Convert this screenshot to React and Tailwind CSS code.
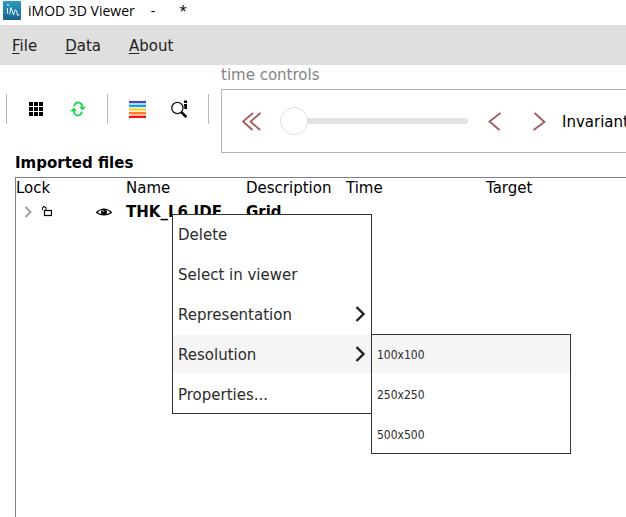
import React from "react";

function Separator() {
  return <div className="h-[30px] w-px shrink-0 bg-[#b9b9b9]" />;
}

function ToolButton({ label, children }) {
  return (
    <button type="button" aria-label={label} className="flex h-10 w-[42px] items-center justify-center">
      {children}
    </button>
  );
}

function AppIcon() {
  return (
    <svg width="18" height="19" viewBox="0 0 18 19" aria-hidden="true">
      <defs>
        <linearGradient id="tile" x1="0" y1="0" x2="0" y2="1">
          <stop offset="0" stopColor="#2a9cc0" />
          <stop offset="1" stopColor="#1a6391" />
        </linearGradient>
      </defs>
      <rect width="18" height="19" rx="1" fill="url(#tile)" />
      <path
        d="M4.500 7V12.500M6.500 13.500L8 6.500L10.500 14L12 9L13.500 9.500L14.500 14.500L16.500 13.500"
        fill="none"
        stroke="#e4f4fa"
        strokeWidth="1"
      />
      <circle cx="5" cy="4" r="0.9" fill="#d9f0f7" />
    </svg>
  );
}

function GridIcon() {
  const steps = [0, 5, 10];
  return (
    <svg width="14" height="14" viewBox="0 0 14 14" aria-hidden="true">
      {steps.map((y) => steps.map((x) => <rect key={`${x}-${y}`} x={x} y={y} width="4" height="4" fill="#000" />))}
    </svg>
  );
}

function RefreshIcon() {
  return (
    <svg width="16" height="16" viewBox="0 0 16 16" aria-hidden="true">
      <path d="M4 5.200Q5.200 1.600 8.200 1.400Q12 1.800 12.400 6.500" fill="none" stroke="#19d84a" strokeWidth="1.800" />
      <path d="M12 10.800Q10.800 14.400 7.800 14.600Q4 14.200 3.600 9.500" fill="none" stroke="#19d84a" strokeWidth="1.800" />
      <path d="M9 5.800H16L12.400 9.400Z" fill="#19d84a" />
      <path d="M0 10.200H7L3.600 6.600Z" fill="#19d84a" />
    </svg>
  );
}

function LegendIcon() {
  return (
    <svg width="17" height="18" viewBox="0 0 17 18" aria-hidden="true">
      <rect width="17" height="18" fill="#f4f0f4" />
      <rect y="1" width="17" height="2" fill="#3f48cc" />
      <rect y="3" width="17" height="2" fill="#b9d2f5" />
      <rect y="5" width="17" height="2" fill="#00a8f3" />
      <rect y="7" width="17" height="1" fill="#e3f0dc" />
      <rect y="8" width="17" height="1" fill="#ffdf6b" />
      <rect y="9" width="17" height="1" fill="#ffca18" />
      <rect y="10" width="17" height="1" fill="#ffe08a" />
      <rect y="12" width="17" height="2" fill="#ff7f27" />
      <rect y="14" width="17" height="2" fill="#ffb9a0" />
      <rect y="16" width="17" height="2" fill="#f5121a" />
    </svg>
  );
}

function IdentifyIcon() {
  return (
    <svg width="17" height="18" viewBox="0 0 17 18" aria-hidden="true">
      <circle cx="6.4" cy="8" r="5.6" fill="none" stroke="#111" strokeWidth="1.3" />
      <path d="M10.4 12.2L15.4 17.2" stroke="#000" strokeWidth="2.6" />
      <rect x="13" y="0.5" width="3" height="2.5" fill="#000" />
      <path d="M13 4H16V9H13.4Z" fill="#000" />
    </svg>
  );
}

function Chevron({ d, width, height, color, stroke }) {
  return (
    <svg width={width} height={height} viewBox={`0 0 ${width} ${height}`} aria-hidden="true" className="shrink-0">
      <path d={d} fill="none" stroke={color} strokeWidth={stroke} />
    </svg>
  );
}

function LockIcon() {
  return (
    <svg width="10" height="12" viewBox="0 0 10 12" aria-hidden="true">
      <path d="M0.500 4V1.500H1.500V0.500H3V1.500H4V4" fill="none" stroke="#000" />
      <rect x="2.500" y="4.500" width="7" height="5" fill="none" stroke="#000" strokeWidth="1.200" />
    </svg>
  );
}

function EyeIcon() {
  return (
    <svg width="16" height="9" viewBox="0 0 16 9" aria-hidden="true">
      <path d="M0.5 4.5Q4 1 8 1Q12 1 15.5 4.5Q12 7 8 7Q4 7 0.5 4.5Z" fill="#fff" stroke="#000" strokeWidth="1.1" />
      <circle cx="8" cy="4" r="3" fill="#000" />
      <circle cx="7" cy="3" r="0.8" fill="#fff" />
    </svg>
  );
}

function MenuBar() {
  return (
    <nav className="flex h-10 items-center gap-7 bg-[#dfdfdf] px-3 pt-0.5 text-[#222]">
      {["File", "Data", "About"].map((name) => (
        <button type="button" key={name}>
          <span className="underline underline-offset-2">{name[0]}</span>
          {name.slice(1)}
        </button>
      ))}
    </nav>
  );
}

function TimeControls() {
  return (
    <section className="ml-3 min-w-0 flex-1">
      <h2 className="h-6 text-[#838383]">time controls</h2>
      <div className="flex h-16 items-center overflow-hidden border border-r-0 border-[#b4b4b4] pl-5">
        <button type="button" aria-label="First time step" className="w-[38px] shrink-0">
          <Chevron d="M11 1L1 9.500L10.500 18M18.500 1L8.500 9.500L18 18" width={20} height={19} color="#a25a58" stroke={1.8} />
        </button>
        <input
          type="range"
          aria-label="Time step"
          min="0"
          max="100"
          defaultValue="0"
          className="h-7 w-[188px] shrink-0 appearance-none bg-transparent [&::-webkit-slider-runnable-track]:h-[6px] [&::-webkit-slider-runnable-track]:rounded-full [&::-webkit-slider-runnable-track]:bg-[#e3e3e3] [&::-webkit-slider-thumb]:-mt-[11px] [&::-webkit-slider-thumb]:size-7 [&::-webkit-slider-thumb]:appearance-none [&::-webkit-slider-thumb]:rounded-full [&::-webkit-slider-thumb]:border [&::-webkit-slider-thumb]:border-[#e0e0e0] [&::-webkit-slider-thumb]:bg-white"
        />
        <div className="flex shrink-0 gap-8 pr-4 pl-5">
          <button type="button" aria-label="Previous time step">
            <Chevron d="M12.500 1L1.500 9.500L11.500 18" width={13} height={19} color="#a25a58" stroke={1.8} />
          </button>
          <button type="button" aria-label="Next time step">
            <Chevron d="M1.500 1L11.500 10L0.500 18" width={13} height={19} color="#a25a58" stroke={1.8} />
          </button>
        </div>
        <span className="pt-0.5 whitespace-nowrap">Invariant</span>
      </div>
    </section>
  );
}

function ImportedFiles() {
  return (
    <section className="flex flex-1 flex-col pl-[15px]">
      <h2 className="h-6 font-bold">Imported files</h2>
      <div className="flex-1 overflow-hidden border-t border-l border-[#7f7f89]">
        <table className="w-full table-fixed text-left whitespace-nowrap">
          <colgroup>
            <col className="w-[110px]" />
            <col className="w-[120px]" />
            <col className="w-[100px]" />
            <col className="w-[140px]" />
            <col />
          </colgroup>
          <thead>
            <tr className="h-5">
              {["Lock", "Name", "Description", "Time", "Target"].map((name) => (
                <th key={name} scope="col" className="p-0 font-normal">
                  {name}
                </th>
              ))}
            </tr>
          </thead>
          <tbody>
            <tr className="h-7 font-bold">
              <td className="p-0">
                <div className="flex items-center pl-2">
                  <button type="button" aria-label="Expand" className="w-[18px]">
                    <Chevron d="M1.500 1L6.500 6L1.500 11" width={9} height={12} color="#a0a0a0" stroke={2} />
                  </button>
                  <button type="button" aria-label="Lock" className="w-[54px]">
                    <LockIcon />
                  </button>
                  <button type="button" aria-label="Visible">
                    <EyeIcon />
                  </button>
                </div>
              </td>
              <td className="p-0">THK_L6.IDF</td>
              <td className="p-0">Grid</td>
              <td />
              <td />
            </tr>
          </tbody>
        </table>
      </div>
    </section>
  );
}

function MenuItem({ label, arrow, active, small, children }) {
  return (
    <li className="relative">
      <button
        type="button"
        className={`flex h-[38px] w-full items-center justify-between px-[5px] ${active ? "bg-[#f5f5f5]" : "bg-white"} ${
          small ? "font-['DejaVu_Sans_Condensed','DejaVu_Sans',sans-serif] text-[12px]" : ""
        }`}
      >
        <span className="pt-0.5">{label}</span>
        {arrow && <Chevron d="M1.500 1L8.500 8L1.500 15" width={11} height={16} color="#222" stroke={2.4} />}
      </button>
      {children}
    </li>
  );
}

function ContextMenu() {
  return (
    <ul className="absolute top-[214px] left-[172px] flex w-[200px] flex-col gap-0.5 border border-[#333] bg-white text-[#2b2b2b]">
      <MenuItem label="Delete" />
      <MenuItem label="Select in viewer" />
      <MenuItem label="Representation" arrow />
      <MenuItem label="Resolution" arrow active>
        <ul className="absolute -top-px left-full flex w-[200px] flex-col gap-0.5 border border-[#333] bg-white">
          <MenuItem label="100x100" small active />
          <MenuItem label="250x250" small />
          <MenuItem label="500x500" small />
        </ul>
      </MenuItem>
      <MenuItem label="Properties..." />
    </ul>
  );
}

export default function App() {
  return (
    <div className="relative flex min-h-screen flex-col overflow-hidden bg-white font-['DejaVu_Sans',Verdana,sans-serif] text-[15px] leading-5 text-black">
      <header className="flex h-[25px] items-start pl-[3px] pt-px font-['Open_Sans',sans-serif] text-[14px]">
        <AppIcon />
        <h1 className="ml-[7px] flex gap-4 whitespace-nowrap">
          <span>iMOD 3D Viewer</span>
          <span>-</span>
          <span className="ml-2">*</span>
        </h1>
      </header>
      <MenuBar />
      <div className="flex h-[88px]">
        <div className="flex shrink-0 items-center pl-1.5">
          <Separator />
          <div className="flex px-2">
            <ToolButton label="Grid">
              <GridIcon />
            </ToolButton>
            <ToolButton label="Refresh">
              <RefreshIcon />
            </ToolButton>
          </div>
          <Separator />
          <div className="flex px-2">
            <ToolButton label="Legend">
              <LegendIcon />
            </ToolButton>
            <ToolButton label="Identify">
              <IdentifyIcon />
            </ToolButton>
          </div>
          <Separator />
        </div>
        <TimeControls />
      </div>
      <ImportedFiles />
      <ContextMenu />
    </div>
  );
}
